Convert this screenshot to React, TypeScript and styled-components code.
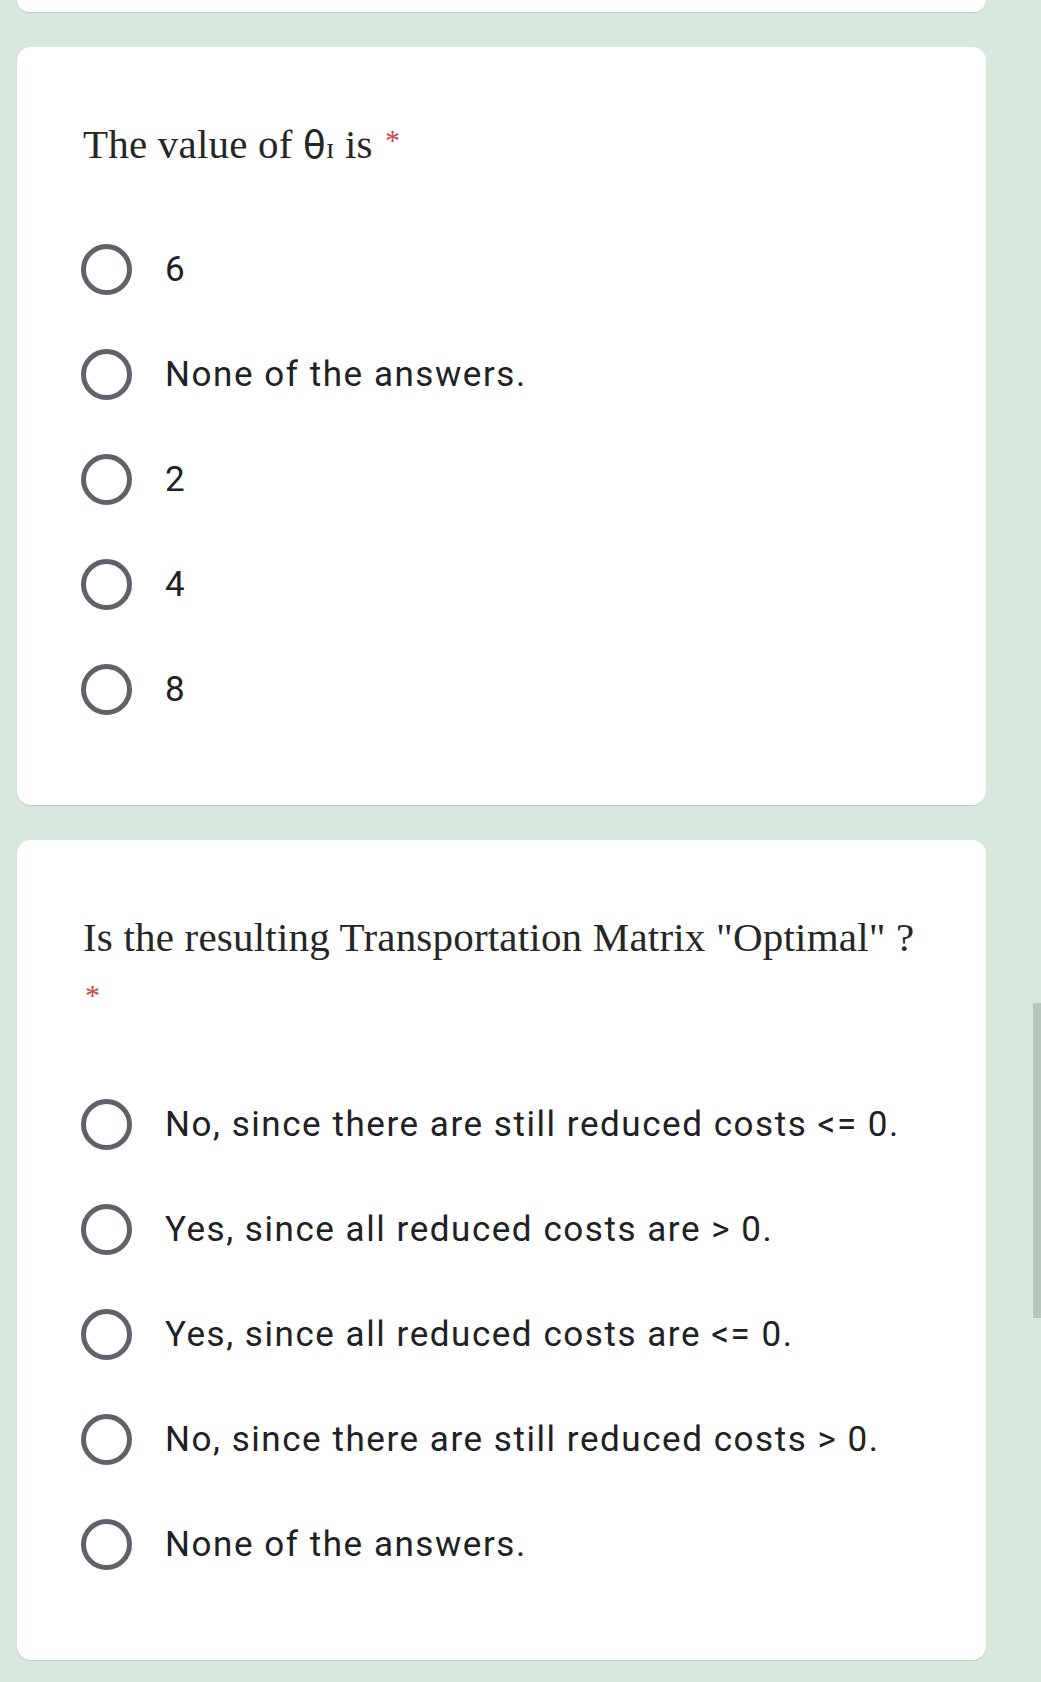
import React from "react";
import styled, { createGlobalStyle } from "styled-components";

const Global = createGlobalStyle`
  html, body {
    margin: 0;
    padding: 0;
    background: #d9e8dc;
  }
  body {
    font-family: Roboto, "Liberation Sans", sans-serif;
    color: #202124;
  }
`;

const Page = styled.div`
  position: relative;
  min-height: 1682px;
  padding: 1px 55px 0 17px;
  display: flex;
  flex-direction: column;
  gap: 35px;
  background: #d9e8dc;
`;

const CardStub = styled.div`
  height: 12px;
  margin-top: -1px;
  background: #ffffff;
  border-radius: 0 0 14px 14px;
  box-shadow: 0 1px 1px rgba(0, 0, 0, 0.12);
`;

const Card = styled.section`
  background: #ffffff;
  border-radius: 14px;
  box-shadow: 0 1px 1px rgba(0, 0, 0, 0.12);
  padding: 66px 64px 63px 64px;
  display: flex;
  flex-direction: column;
  gap: 42px;
`;

const Title = styled.div`
  margin-left: 2px;
  font-family: "Liberation Serif", "Times New Roman", serif;
  font-size: 41px;
  letter-spacing: 0.2px;
  line-height: 62px;
  color: #262626;
`;

const Theta = styled.span`
  font-family: "DejaVu Sans", sans-serif;
  font-size: 37px;
  line-height: 1;
`;

const SmallCap = styled.span`
  font-size: 30px;
  line-height: 1;
`;

const Star = styled.span`
  position: relative;
  top: -8px;
  margin-left: 2px;
  font-size: 30px;
  line-height: 1;
  color: #d0453f;
`;

const Options = styled.div`
  display: flex;
  flex-direction: column;
`;

const Row = styled.label`
  height: 105px;
  display: flex;
  align-items: center;
  gap: 33px;
`;

const Radio = styled.span`
  width: 51px;
  height: 51px;
  box-sizing: border-box;
  border: 5px solid #5f6368;
  border-radius: 50%;
  flex: none;
`;

const OptionText = styled.span`
  font-family: Roboto, "Liberation Sans", sans-serif;
  font-size: 35px;
  color: #202124;
  letter-spacing: 1.55px;
`;

const Scrollbar = styled.div`
  position: absolute;
  right: 0;
  top: 1003px;
  width: 8px;
  height: 315px;
  background: #b6c6ba;
`;

const q1 = ["6", "None of the answers.", "2", "4", "8"];
const q2 = [
  "No, since there are still reduced costs <= 0.",
  "Yes, since all reduced costs are > 0.",
  "Yes, since all reduced costs are <= 0.",
  "No, since there are still reduced costs > 0.",
  "None of the answers.",
];

const OptionList = ({ items }: { items: string[] }) => (
  <Options>
    {items.map((t, i) => (
      <Row key={i}>
        <Radio />
        <OptionText>{t}</OptionText>
      </Row>
    ))}
  </Options>
);

export default function App() {
  return (
    <>
      <Global />
      <Page>
        <CardStub />
        <Card>
          <Title>
            The value of <Theta>θ</Theta>
            <SmallCap>ɪ</SmallCap> is <Star>*</Star>
          </Title>
          <OptionList items={q1} />
        </Card>
        <Card>
          <Title>
            Is the resulting Transportation Matrix "Optimal" ? <Star>*</Star>
          </Title>
          <OptionList items={q2} />
        </Card>
        <Scrollbar />
      </Page>
    </>
  );
}
